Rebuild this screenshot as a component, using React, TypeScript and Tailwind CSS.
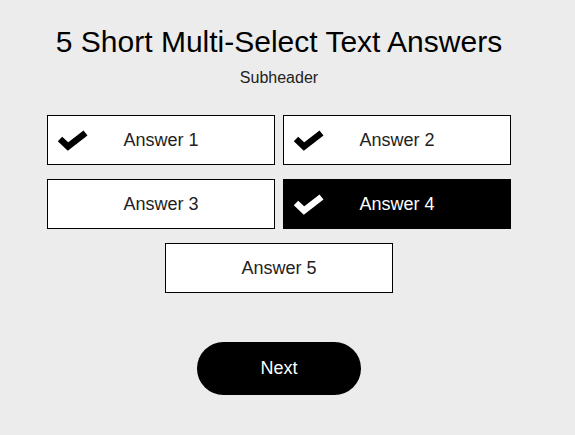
const answers = [
  { label: "Answer 1", checked: true, active: false },
  { label: "Answer 2", checked: true, active: false },
  { label: "Answer 3", checked: false, active: false },
  { label: "Answer 4", checked: true, active: true },
];

const Check = () => (
  <svg width="32" height="22" viewBox="0 0 32 22" fill="none">
    <polyline
      points="3,10 11,17.5 28.5,4"
      stroke="currentColor"
      strokeWidth="6.5"
      strokeLinecap="butt"
      strokeLinejoin="miter"
    />
  </svg>
);

const AnswerBox = ({ label, checked, active }: { label: string; checked: boolean; active: boolean }) => (
  <button
    className={
      "relative flex h-[50px] w-[228px] items-center justify-center border text-[18px] " +
      (active ? "border-black bg-black text-white" : "border-black bg-white text-[#222]")
    }
  >
    {checked && (
      <span className={"absolute left-[9px] top-[13px] " + (active ? "text-white" : "text-black")}>
        <Check />
      </span>
    )}
    {label}
  </button>
);

const App = () => {
  return (
    <div className="h-[435px] w-full bg-[#ececec] font-['Liberation_Sans',Arial,sans-serif]">
      <div className="flex w-[558px] flex-col items-center pt-[25px]">
        <h1 className="text-[30px] leading-[34px] text-black">5 Short Multi-Select Text Answers</h1>
        <p className="mt-[10px] text-[16px] leading-[18px] text-[#222]">Subheader</p>

        <div className="mt-[28px] grid grid-cols-2 gap-x-2 gap-y-[14px]">
          {answers.map((a) => (
            <AnswerBox key={a.label} {...a} />
          ))}
          <div className="col-span-2 flex justify-center">
            <AnswerBox label="Answer 5" checked={false} active={false} />
          </div>
        </div>

        <button className="mt-[49px] h-[53px] w-[164px] rounded-full bg-black text-[18px] text-white">
          Next
        </button>
      </div>
    </div>
  );
};

export default App;
